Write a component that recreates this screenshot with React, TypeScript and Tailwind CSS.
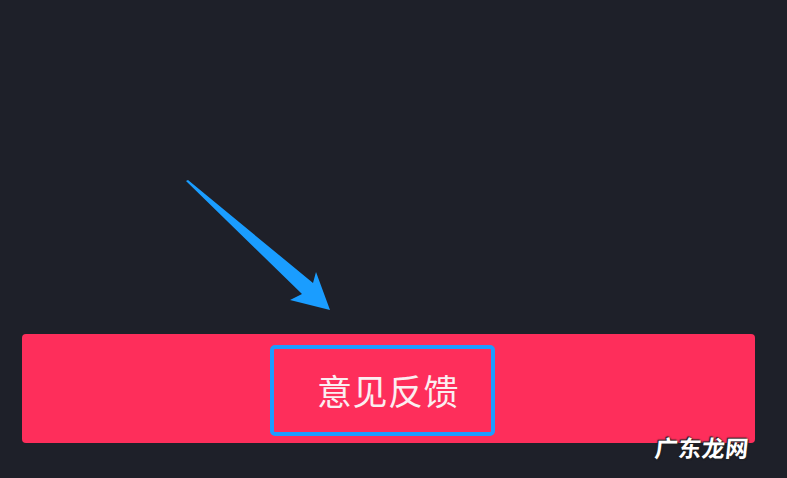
import React from "react";

export default function App() {
  return (
    <div className="relative w-[787px] h-[478px] overflow-hidden bg-[#1e2029]" style={{ fontFamily: '"Noto Sans CJK SC", "Noto Sans", sans-serif' }}>
      <div className="pt-[334px] pl-[22px] pr-[32px]">
        <div className="h-[109px] rounded-[4px] bg-[#fe2e5b] flex items-center justify-center">
          <div className="ml-[-13px] w-[225px] h-[91px] mt-[4px] rounded-[5px] border-[4px] border-[#1d9cff] flex items-center justify-center">
            <span className="ml-[12px] mt-[-3px] text-[35px] leading-none text-[#fbeef1] tracking-[0.5px]">意见反馈</span>
          </div>
        </div>
      </div>
      <svg className="absolute left-0 top-0" width="787" height="478" viewBox="0 0 787 478">
        <polygon points="186,181 188,180 313,283 316,272 330,310 290,300 302,294" fill="#1a9dff" />
      </svg>
      <div
        className="absolute left-[655px] top-[436px] text-[23px] leading-none font-bold text-white -skew-x-6 tracking-[0.5px]"
        style={{ textShadow: "0 0 2px #222, 1px 1px 1px #222, -1px -1px 1px #222" }}
      >
        广东龙网
      </div>
    </div>
  );
}
